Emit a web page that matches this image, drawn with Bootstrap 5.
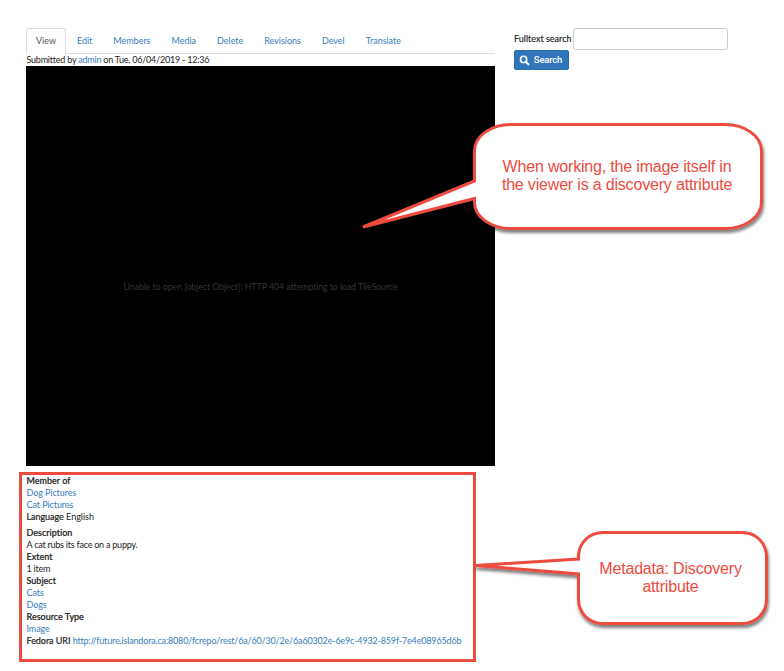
<!DOCTYPE html>
<html lang="en">
<head>
<meta charset="utf-8">
<meta name="viewport" content="width=device-width, initial-scale=1">
<title>Repository item</title>
<link href="https://cdn.jsdelivr.net/npm/bootstrap@5.3.0/dist/css/bootstrap.min.css" rel="stylesheet">
<style>
  body { font-family: Lato, sans-serif; font-size: 9px; line-height: 12px; color: #222; background: #fff; width: 784px; height: 671px; overflow: hidden; font-variant-ligatures: none; }
  a { color: #3a7cbd; text-decoration: none; }
  .page { padding: 28px 0 0 26px; gap: 19px; }
  .main-col { width: 469px; }
  .nav-tabs { --bs-nav-tabs-border-color: #ddd; --bs-nav-tabs-border-radius: 3px; gap: 1px; }
  .nav-tabs .nav-link { padding: 5px 9px 6px; line-height: 13px; color: #3a7cbd; letter-spacing: -.02px; }
  .nav-tabs .nav-link.active { color: #555; border-color: #ddd #ddd #fff; }
  .submitted { letter-spacing: -.22px; padding-left: .5px; }
  .viewer { height: 400px; background: #000; color: #30343a; padding-top: 41px; letter-spacing: -.16px; }
  .metadata { width: 457px; height: 190px; margin: 6px 0 0 -7px; border: 3px solid #ec4c40; padding: 0 4.500px; }
  .metadata dt { font-weight: 500; -webkit-text-stroke: .2px #222; }
  .metadata dd { letter-spacing: -.08px; }
  .metadata .summary { letter-spacing: -.23px; }
  .metadata .field-name { -webkit-text-stroke: .2px #222; letter-spacing: -.05px; }
  .metadata .uri { letter-spacing: -.165px; }
  .search-label { -webkit-text-stroke: .15px #222; width: 59px; white-space: nowrap; }
  .search-box { width: 155px; height: 22px; min-height: 0; padding: 2px 6px; border: 1px solid #ccc; border-radius: 3px; font-size: 9px; }
  .btn-search { height: 20px; width: 55px; padding: 0 2px 0 0; border: 1px solid #2e6da4; border-radius: 2px; background: #2f77ba; color: #fff; font-family: Roboto, sans-serif; font-size: 9.5px; line-height: 18px; font-weight: 500; letter-spacing: -.2px; gap: 4px; }
  .callouts { left: 0; top: 0; }
  .note { font-family: "Liberation Sans", Arial, sans-serif; font-size: 16px; line-height: 18px; color: #ec4c40; text-align: center; white-space: nowrap; letter-spacing: -.18px; }
  .note-viewer { left: 474px; top: 158px; width: 286px; }
  .note-metadata { left: 578px; top: 560px; width: 185px; }
</style>
</head>
<body class="position-relative">
<div class="page d-flex">
  <main class="main-col">
    <ul class="nav nav-tabs flex-nowrap">
      <li class="nav-item"><a class="nav-link active" href="#">View</a></li>
      <li class="nav-item"><a class="nav-link" href="#">Edit</a></li>
      <li class="nav-item"><a class="nav-link" href="#">Members</a></li>
      <li class="nav-item"><a class="nav-link" href="#">Media</a></li>
      <li class="nav-item"><a class="nav-link" href="#">Delete</a></li>
      <li class="nav-item"><a class="nav-link" href="#">Revisions</a></li>
      <li class="nav-item"><a class="nav-link" href="#">Devel</a></li>
      <li class="nav-item"><a class="nav-link" href="#">Translate</a></li>
    </ul>
    <div class="submitted">Submitted by <a href="#">admin</a> on Tue, 06/04/2019 - 12:36</div>
    <div class="viewer d-flex align-items-center justify-content-center">Unable to open [object Object]: HTTP 404 attempting to load TileSource</div>
    <section class="metadata">
      <dl class="mb-0">
        <dt>Member of</dt>
        <dd class="mb-0"><a class="d-block" href="#">Dog Pictures</a><a class="d-block" href="#">Cat Pictures</a></dd>
      </dl>
      <div class="mb-1"><span class="field-name">Language</span> English</div>
      <dl class="mb-0">
        <dt>Description</dt><dd class="mb-0 summary">A cat rubs its face on a puppy.</dd>
        <dt>Extent</dt><dd class="mb-0 summary">1 item</dd>
        <dt>Subject</dt><dd class="mb-0"><a class="d-block" href="#">Cats</a><a class="d-block" href="#">Dogs</a></dd>
        <dt>Resource Type</dt><dd class="mb-0"><a href="#">Image</a></dd>
      </dl>
      <div class="text-nowrap"><span class="field-name">Fedora URI</span> <a class="uri" href="#">http://future.islandora.ca:8080/fcrepo/rest/6a/60/30/2e/6a60302e-6e9c-4932-859f-7e4e08965d6b</a></div>
    </section>
  </main>
  <aside>
    <form>
      <div class="d-flex align-items-center"><label class="search-label" for="q">Fulltext search</label><input class="form-control search-box" id="q" type="text"></div>
      <button class="btn btn-search d-flex align-items-center justify-content-center" type="button">
        <svg width="11" height="11" viewBox="0 0 11 11" fill="none" stroke="#fff" stroke-linecap="round"><circle cx="4.6" cy="4.4" r="3.1" stroke-width="1.6"/><path d="M7.1 7 9.5 9.4" stroke-width="2"/></svg>
        <span>Search</span>
      </button>
    </form>
  </aside>
</div>
<svg class="callouts position-absolute" width="784" height="671" viewBox="0 0 784 671" fill="#fff" stroke="#ec4c40" stroke-width="3">
  <defs><filter id="shade" x="-10%" y="-10%" width="120%" height="130%"><feDropShadow dx="1" dy="3" stdDeviation="1.800" flood-color="#000" flood-opacity=".5"/></filter></defs>
  <path filter="url(#shade)" d="M511 124.500H725C745 124.500 761.500 136 761.500 151V202C761.500 217 745 228.500 725 228.500H511C491 228.500 474.500 217 474.500 202V198.500L363 227 474.500 181V151C474.500 136 491 124.500 511 124.500Z"/>
  <path filter="url(#shade)" d="M603 532.500H742C756 532.500 766.500 543 766.500 557V599C766.500 613 756 623.500 742 623.500H603C589 623.500 578.500 613 578.500 599V574L475 565.500 578.500 559V557C578.500 543 589 532.500 603 532.500Z"/>
</svg>
<div class="note note-viewer position-absolute">When working, the image itself in<br>the viewer is a discovery attribute</div>
<div class="note note-metadata position-absolute">Metadata: Discovery<br>attribute</div>
<script src="https://cdn.jsdelivr.net/npm/bootstrap@5.3.0/dist/js/bootstrap.bundle.min.js"></script>
</body>
</html>
